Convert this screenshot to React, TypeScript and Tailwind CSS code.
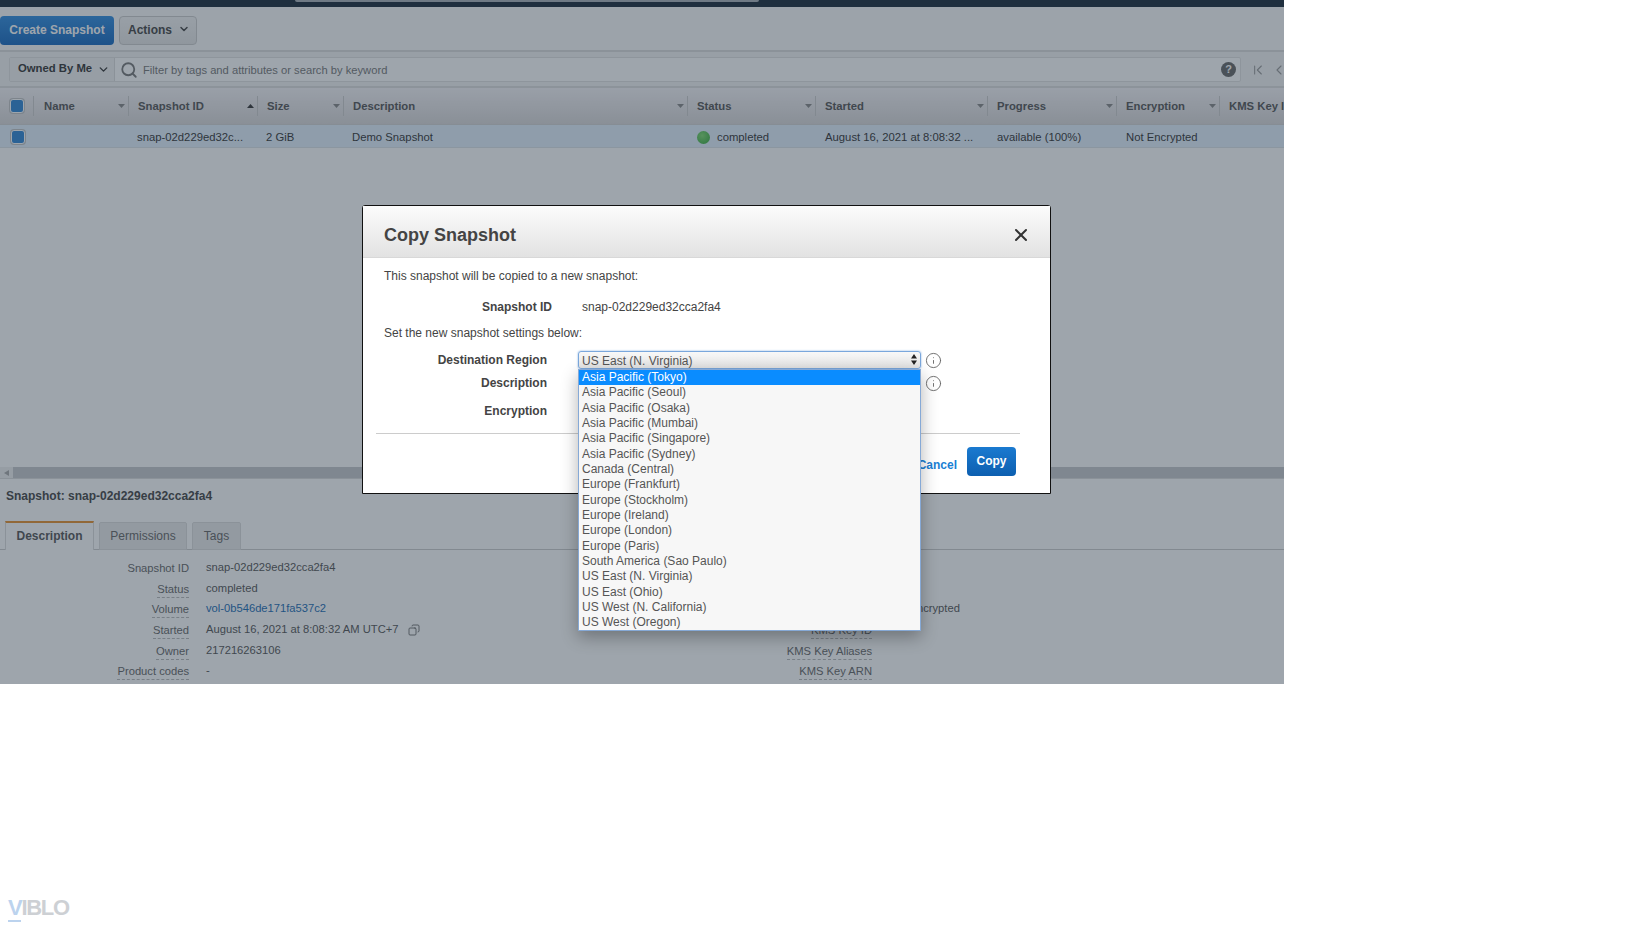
import React from 'react';
import { ChevronDown, ChevronFirst, ChevronLeft, Copy, Info, Search, X } from 'lucide-react';

const GRID = 'grid grid-cols-[34px_95px_129px_86px_344px_128px_172px_129px_103px_200px]';

const COLUMNS = [
  { label: 'Name', sort: 'none' },
  { label: 'Snapshot ID', sort: 'asc' },
  { label: 'Size', sort: 'none' },
  { label: 'Description', sort: 'none' },
  { label: 'Status', sort: 'none' },
  { label: 'Started', sort: 'none' },
  { label: 'Progress', sort: 'none' },
  { label: 'Encryption', sort: 'none' },
  { label: 'KMS Key ID', sort: 'hidden' },
];

const REGIONS = [
  'Asia Pacific (Tokyo)',
  'Asia Pacific (Seoul)',
  'Asia Pacific (Osaka)',
  'Asia Pacific (Mumbai)',
  'Asia Pacific (Singapore)',
  'Asia Pacific (Sydney)',
  'Canada (Central)',
  'Europe (Frankfurt)',
  'Europe (Stockholm)',
  'Europe (Ireland)',
  'Europe (London)',
  'Europe (Paris)',
  'South America (Sao Paulo)',
  'US East (N. Virginia)',
  'US East (Ohio)',
  'US West (N. California)',
  'US West (Oregon)',
];

const DETAILS = [
  { label: 'Snapshot ID', value: 'snap-02d229ed32cca2fa4', dashed: false },
  { label: 'Status', value: 'completed', dashed: true },
  { label: 'Volume', value: 'vol-0b546de171fa537c2', dashed: true, link: true },
  { label: 'Started', value: 'August 16, 2021 at 8:08:32 AM UTC+7', dashed: true, copy: true },
  { label: 'Owner', value: '217216263106', dashed: true },
  { label: 'Product codes', value: '-', dashed: true },
];

const RIGHT_DETAILS = [
  { label: '', value: '' },
  { label: '', value: '' },
  { label: 'Encryption', value: 'Not Encrypted' },
  { label: 'KMS Key ID', value: '' },
  { label: 'KMS Key Aliases', value: '' },
  { label: 'KMS Key ARN', value: '' },
];

function Caret({ up }: { up?: boolean }) {
  return (
    <svg width="7" height="4" viewBox="0 0 7 4" className="shrink-0">
      <path d={up ? 'M0 4 L3.5 0 L7 4 Z' : 'M0 0 L7 0 L3.5 4 Z'} fill={up ? '#333' : '#888'} />
    </svg>
  );
}

function Checkbox() {
  return (
    <div className="w-[14px] h-[14px] rounded-[3px] bg-[#2f86d6] border border-white shadow-[0_0_0_1px_#c4c4c4]" />
  );
}

export default function App() {
  return (
    <div className="h-screen bg-white flex flex-col font-['Liberation_Sans',Arial,sans-serif] overflow-hidden">
      <div className="relative w-[1284px] h-[684px] shrink-0 overflow-hidden bg-white text-[#444]">
        {/* Console nav strip */}
        <div className="h-[7px] bg-[#182839] pl-[295px]">
          <div className="w-[464px] h-[2px] bg-[#aab1b8] rounded-b-sm" />
        </div>

        {/* Toolbar */}
        <div className="h-[45px] border-b-2 border-[#dcdcdc] bg-[#fbfbfb] pt-[9px] flex gap-[5px] items-start">
          <button className="h-[29px] w-[114px] pb-[2px] rounded-[4px] bg-gradient-to-b from-[#2f8ce0] to-[#1669c0] text-white text-[12px] font-bold">
            Create Snapshot
          </button>
          <button className="h-[29px] w-[78px] pb-[2px] pl-[2px] rounded-[4px] border border-[#ccc] bg-gradient-to-b from-[#f5f5f5] to-[#e6e6e6] text-[#444] text-[12px] font-bold flex items-center justify-center gap-[6px]">
            Actions
            <ChevronDown size={12} strokeWidth={3} className="mt-[-2px]" />
          </button>
        </div>

        {/* Filter bar */}
        <div className="h-[36px] bg-[#f5f5f5] border-b-2 border-[#dedede] pl-[9px] pt-[5px] flex items-start">
          <div className="w-[1232px] h-[25px] shrink-0 flex border border-[#e2e2e2] rounded-[2px] bg-white items-center">
            <div className="w-[105px] h-full bg-[#f2f2f2] border-r border-[#ddd] flex items-center gap-[5px] pl-[8px] pb-[2px] text-[11.3px] font-bold text-[#333]">
              Owned By Me
              <ChevronDown size={13} strokeWidth={2.5} className="mt-[2px]" />
            </div>
            <Search size={18} strokeWidth={2.4} className="ml-[5px] mt-[1px] text-[#777]" />
            <span className="ml-[5px] mt-[1px] flex-1 text-[11.2px] text-[#777]">Filter by tags and attributes or search by keyword</span>
            <div className="w-[15px] h-[15px] mr-[4px] rounded-full bg-[#666] text-white text-[11px] font-bold flex items-center justify-center">?</div>
          </div>
          <ChevronFirst size={16} strokeWidth={1.6} className="ml-[9px] mt-[5px] shrink-0 text-[#999]" />
          <ChevronLeft size={16} strokeWidth={1.6} className="ml-[5px] mt-[5px] shrink-0 text-[#999]" />
        </div>

        {/* Table header */}
        <div className={`${GRID} h-[37px] bg-gradient-to-b from-[#f7f5f8] to-[#dad8d9] border-b border-[#d4d4d4] items-center`}>
          <div className="pl-[10px] h-[20px] flex items-center border-r border-[#ccc]">
            <Checkbox />
          </div>
          {COLUMNS.map((col) => (
            <div key={col.label} className={`h-[20px] pr-[3px] flex items-center justify-between border-r border-[#ccc] text-[11.3px] font-bold text-[#555] whitespace-nowrap ${col.label === 'Name' ? 'pl-[10px]' : 'pl-[9px]'}`}>
              {col.label}
              {col.sort === 'asc' && <Caret up />}
              {col.sort === 'none' && <Caret />}
            </div>
          ))}
        </div>

        {/* Selected row */}
        <div className={`${GRID} h-[23px] pt-[2px] bg-[#e3f0fd] border-b border-[#dde3ea] items-center text-[11.3px] text-[#333]`}>
          <div className="pl-[11px] flex items-center">
            <Checkbox />
          </div>
          <div />
          <div className="pl-[8px] truncate">snap-02d229ed32c...</div>
          <div className="pl-[8px]">2 GiB</div>
          <div className="pl-[8px]">Demo Snapshot</div>
          <div className="pl-[9px] flex items-center gap-[7px]">
            <span className="w-[13px] h-[13px] rounded-full bg-[radial-gradient(circle_at_40%_35%,#7fdc6f,#32a83a)]" />
            completed
          </div>
          <div className="pl-[9px] whitespace-nowrap">August 16, 2021 at 8:08:32 ...</div>
          <div className="pl-[9px]">available (100%)</div>
          <div className="pl-[9px]">Not Encrypted</div>
          <div />
        </div>

        {/* Empty table area */}
        <div className="h-[319px]" />

        {/* Horizontal scrollbar */}
        <div className="h-[12px] bg-[#f0f0f0] flex items-center border-b border-[#ddd]">
          <svg width="5" height="6" viewBox="0 0 5 6" className="ml-[4px] shrink-0">
            <path d="M5 0 L0 3 L5 6 Z" fill="#aaa" />
          </svg>
          <div className="ml-[4px] flex-1 h-[11px] bg-[#c6c9cc]" />
        </div>

        {/* Details pane */}
        <div className="pt-[9px]">
          <div className="h-[16px] pl-[6px] leading-[16px] text-[12px] font-bold text-[#444]">Snapshot: snap-02d229ed32cca2fa4</div>
          <div className="mt-[17px] h-[29px] pl-[5px] flex gap-[5px] border-b border-[#ccc] text-[12px]">
            <div className="w-[89px] h-[29px] pb-[1px] bg-white border border-[#ddd] border-t-2 border-t-[#e8912d] border-b-0 font-bold text-[#555] flex items-center justify-center">Description</div>
            <div className="w-[88px] h-[28px] mt-[1px] pb-[1px] bg-[#ececec] border border-[#ddd] rounded-t-[2px] text-[#666] flex items-center justify-center">Permissions</div>
            <div className="w-[49px] h-[28px] mt-[1px] pb-[1px] bg-[#ececec] border border-[#ddd] rounded-t-[2px] text-[#666] flex items-center justify-center">Tags</div>
          </div>
          <div className="flex pt-[9px] text-[11.2px]">
            <div className="w-[600px] flex flex-col">
              {DETAILS.map((row) => (
                <div key={row.label} className="h-[20.7px] flex">
                  <div className="w-[189px] shrink-0 flex justify-end">
                    <span className={`h-[18px] leading-[18px] text-[#666] ${row.dashed ? 'border-b border-dashed border-[#bbb]' : ''}`}>{row.label}</span>
                  </div>
                  <div className={`ml-[17px] leading-[17px] flex items-start gap-[9px] ${row.link ? 'text-[#1a6cb5]' : 'text-[#555]'}`}>
                    {row.value}
                    {row.copy && <Copy size={12} strokeWidth={1.6} className="mt-[3px] -scale-x-100" />}
                  </div>
                </div>
              ))}
            </div>
            <div className="flex flex-col">
              {RIGHT_DETAILS.map((row, i) => (
                <div key={i} className="h-[20.7px] flex">
                  <div className="w-[272px] shrink-0 flex justify-end">
                    {row.label && (
                      <span className="h-[18px] leading-[18px] text-[#666] border-b border-dashed border-[#bbb]">{row.label}</span>
                    )}
                  </div>
                  {row.value && <div className="ml-[17px] leading-[17px] text-[#555]">{row.value}</div>}
                </div>
              ))}
            </div>
          </div>
        </div>

        {/* Dim overlay */}
        <div className="absolute inset-0 bg-[#283746]/45" />

        {/* Copy Snapshot modal */}
        <div className="absolute left-[362px] top-[205px] w-[689px] h-[289px] bg-white border border-[#111] rounded-t-[3px] text-[12px] text-[#444]">
          <div className="h-[52px] pt-[7px] bg-gradient-to-b from-[#fcfcfc] to-[#e2e2e2] border-b border-[#d8d8d8] pl-[21px] pr-[21px] flex items-center justify-between">
            <h2 className="text-[18px] font-bold text-[#444]">Copy Snapshot</h2>
            <X size={20} strokeWidth={2.4} className="text-[#333] mr-[-2px] mt-[-1px]" />
          </div>
          <div className="px-[21px] pt-[9px]">
            <p className="h-[18px] leading-[18px]">This snapshot will be copied to a new snapshot:</p>
            <div className="mt-[13px] h-[18px] leading-[18px] flex">
              <div className="w-[168px] text-right font-bold">Snapshot ID</div>
              <div className="ml-[30px]">snap-02d229ed32cca2fa4</div>
            </div>
            <p className="mt-[8px] h-[18px] leading-[18px]">Set the new snapshot settings below:</p>
            <div className="mt-[9px] h-[18px] leading-[18px] flex">
              <div className="w-[163px] text-right font-bold">Destination Region</div>
              <div className="relative ml-[31px] w-[343px] h-[18px]">
                <div className="h-full pl-[3px] pr-[3px] rounded-[3px] border border-[#7aa7dc] shadow-[0_0_2px_#7aa7dc] bg-gradient-to-b from-[#f8f8f8] to-[#e4e4e4] text-[12px] text-[#555] flex items-center justify-between">
                  <span className="mt-[1px]">US East (N. Virginia)</span>
                  <svg width="6" height="11" viewBox="0 0 6 11" className="shrink-0 mb-[2px]">
                    <path d="M3 0 L6 4.5 L0 4.5 Z M3 11 L6 6.5 L0 6.5 Z" fill="#222" />
                  </svg>
                </div>
                <ul className="absolute z-10 left-0 top-[18px] w-[343px] h-[262px] border border-[#86a9d6] bg-[#f7f7f7] shadow-[0_6px_16px_rgba(0,0,0,0.3)] text-[12px] text-[#555]">
                  {REGIONS.map((region, i) => (
                    <li key={region} className={`h-[15.33px] leading-[15.33px] pl-[3px] whitespace-nowrap ${i === 0 ? 'bg-[#0a8cff] text-white' : ''}`}>
                      {region}
                    </li>
                  ))}
                </ul>
              </div>
              <Info size={17} strokeWidth={1.3} className="ml-[4px] mt-[1px] text-[#666]" />
            </div>
            <div className="mt-[5px] h-[18px] leading-[18px] flex">
              <div className="w-[163px] text-right font-bold">Description</div>
              <Info size={17} strokeWidth={1.3} className="ml-[378px] mt-[1px] text-[#666]" />
            </div>
            <div className="mt-[10px] h-[18px] leading-[18px]">
              <div className="w-[163px] text-right font-bold">Encryption</div>
            </div>
            <div className="mt-[13px] ml-[-8px] mr-[9px] border-t border-[#ccc]" />
            <div className="mt-[13px] pr-[13px] flex justify-end items-center gap-[10px]">
              <span className="mt-[6px] font-bold text-[#1a7fd4]">Cancel</span>
              <button className="w-[49px] h-[29px] pb-[1px] rounded-[4px] bg-gradient-to-b from-[#1a7ad0] to-[#0d5fb0] text-white font-bold">Copy</button>
            </div>
          </div>
        </div>
      </div>

      {/* Watermark */}
      <div className="ml-[8px] mt-[212px] w-fit h-[24px] leading-[24px] text-[22px] font-bold tracking-[-1.3px] text-[#cdd0d4] select-none">
        <span className="text-[#bcd3ee] border-b-2 border-[#bcd3ee]">V</span>IBLO
      </div>
    </div>
  );
}
